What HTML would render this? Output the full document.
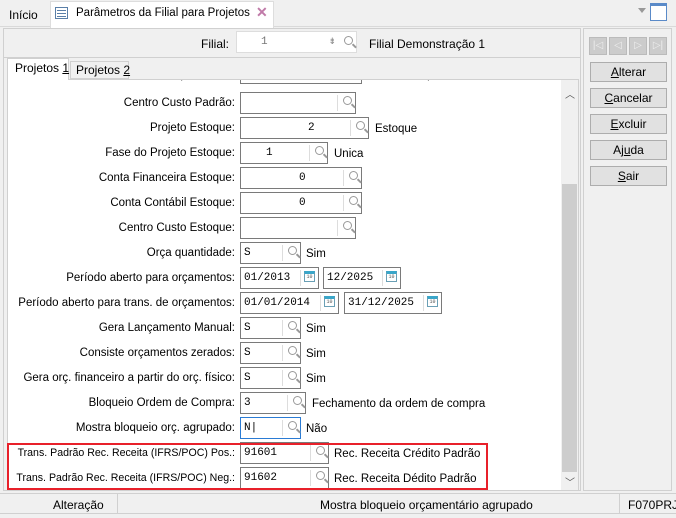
<!DOCTYPE html><html><head><meta charset="utf-8"><style>
*{box-sizing:border-box;margin:0;padding:0}
body{width:676px;height:518px;background:#f0f0f0;font-family:"Liberation Sans",sans-serif;font-size:12px;color:#000;position:relative;overflow:hidden}
.a{position:absolute}
.lbl{position:absolute;right:441px;white-space:nowrap;font-size:11.5px;line-height:14px}
.in{position:absolute;height:22px;border:1px solid #7a7a7a;background:#fff;font-family:"Liberation Mono",monospace;font-size:11px;line-height:20px;padding-left:3px}
.in .s{position:absolute;right:0;top:2px;bottom:2px;width:18px;border-left:1px solid #ddd}
.mg{position:absolute;right:3px;top:3px;width:9px;height:9px;border:1.5px solid #999;border-radius:50%}
.mg:after{content:"";position:absolute;left:7px;top:8px;width:5px;height:1.5px;background:#999;transform:rotate(45deg)}
.cal{position:absolute;right:3px;top:3px;width:11px;height:11px;border:1px solid #6a9fb5;border-top:3px solid #3aa6c9;font-size:5px;line-height:6px;text-align:center;color:#555}
.suf{position:absolute;white-space:nowrap;font-size:11.5px;line-height:14px}
.btn{position:absolute;left:590px;width:77px;height:20px;border:1px solid #adadad;background:#e1e1e1;text-align:center;line-height:18px;font-size:12px}
</style></head><body>
<!-- top tabs -->
<div class="a" style="left:0;top:0;width:676px;height:27px;background:#f0f0f0;border-bottom:1px solid #d9d9d9"></div>
<div class="a" style="left:9px;top:8px;font-size:12px">Início</div>
<div class="a" style="left:50px;top:1px;width:224px;height:27px;background:#fff;border:1px solid #ddd;border-bottom:none"></div>
<div class="a" style="left:55px;top:7px;width:13px;height:12px;border:1px solid #5a7fa8;background:#fff"><div style="margin:2px 1px;height:1px;background:#5a7fa8;box-shadow:0 3px #5a7fa8,0 6px #5a7fa8"></div></div>
<div class="a" style="left:76px;top:7px;font-size:11.5px">Parâmetros da Filial para Projetos</div>
<div class="a" style="left:256px;top:4px;font-size:14px;color:#c07aa8;font-weight:bold">✕</div>
<div class="a" style="left:638px;top:8px;width:0;height:0;border:4px solid transparent;border-top:5px solid #999"></div>
<div class="a" style="left:650px;top:3px;width:17px;height:18px;border:1px solid #5a8ac8;border-top:3px solid #5a8ac8;background:#fff"></div>
<!-- left panel -->
<div class="a" style="left:3px;top:28px;width:578px;height:463px;border:1px solid #d0d0d0;background:#f0f0f0"></div>
<div class="a" style="left:201px;top:37px">Filial:</div>
<div class="in" style="left:236px;top:31px;width:121px;border-color:#ddd;color:#777;padding-left:24px">1<span class="a" style="right:20px;top:0;font-size:9px;color:#888">⇟</span><span class="mg" style="top:4px"></span></div>
<div class="a" style="left:369px;top:37px">Filial Demonstração 1</div>
<!-- sub tabs -->
<div class="a" style="left:3px;top:57px;width:577px;border-top:1px solid #d0d0d0"></div>
<div class="a" style="left:7px;top:58px;width:62px;height:22px;background:#fff;border:1px solid #d0d0d0;border-bottom:none;z-index:2"></div>
<div class="a" style="left:15px;top:61px;z-index:3">Projetos <u>1</u></div>
<div class="a" style="left:70px;top:61px;width:59px;height:18px;border:1px solid #d0d0d0;background:#f0f0f0"></div>
<div class="a" style="left:76px;top:63px">Projetos <u>2</u></div>
<div class="a" style="left:7px;top:79px;width:572px;height:412px;background:#fff;border:1px solid #d0d0d0;overflow:hidden">
<div class="a" style="left:553px;top:0;width:17px;height:411px;background:#f0f0f0"></div>
<div class="a" style="left:554px;top:104px;width:15px;height:288px;background:#cdcdcd"></div>
<div class="a" style="left:557px;top:6px;font-size:10px;color:#555">︿</div>
<div class="a" style="left:557px;top:394px;font-size:10px;color:#555">﹀</div>
</div>
<div class="a" style="left:8px;top:80px;width:550px;height:5px;overflow:hidden"><div class="a" style="left:118px;top:-11px;font-size:11.5px;color:#333">Conta Despesa Padrão:</div><div class="a" style="left:232px;top:-14px;width:122px;height:18px;border:1px solid #7a7a7a"></div><div class="a" style="left:361px;top:-11px;font-size:11.5px;color:#333">Outras Despesas Financeiras</div></div>

<div class="lbl" style="top:96px">Centro Custo Padrão:</div><div class="in" style="left:240px;top:92px;width:116px"><span class="s"></span><span class="mg"></span></div>
<div class="lbl" style="top:121px">Projeto Estoque:</div><div class="in" style="left:240px;top:117px;width:129px;padding-left:67px">2<span class="s"></span><span class="mg"></span></div><div class="suf" style="left:375px;top:122px">Estoque</div>
<div class="lbl" style="top:146px">Fase do Projeto Estoque:</div><div class="in" style="left:240px;top:142px;width:88px;padding-left:25px">1<span class="s"></span><span class="mg"></span></div><div class="suf" style="left:334px;top:147px">Unica</div>
<div class="lbl" style="top:171px">Conta Financeira Estoque:</div><div class="in" style="left:240px;top:167px;width:122px;padding-left:58px">0<span class="s"></span><span class="mg"></span></div>
<div class="lbl" style="top:196px">Conta Contábil Estoque:</div><div class="in" style="left:240px;top:192px;width:122px;padding-left:58px">0<span class="s"></span><span class="mg"></span></div>
<div class="lbl" style="top:221px">Centro Custo Estoque:</div><div class="in" style="left:240px;top:217px;width:116px"><span class="s"></span><span class="mg"></span></div>
<div class="lbl" style="top:246px">Orça quantidade:</div><div class="in" style="left:240px;top:242px;width:61px">S<span class="s"></span><span class="mg"></span></div><div class="suf" style="left:306px;top:247px">Sim</div>
<div class="lbl" style="top:271px">Período aberto para orçamentos:</div><div class="in" style="left:240px;top:267px;width:79px">01/2013<span class="s"></span><span class="cal">10</span></div><div class="in" style="left:323px;top:267px;width:78px">12/2025<span class="s"></span><span class="cal">10</span></div>
<div class="lbl" style="top:296px">Período aberto para trans. de orçamentos:</div><div class="in" style="left:240px;top:292px;width:99px">01/01/2014<span class="s"></span><span class="cal">10</span></div><div class="in" style="left:344px;top:292px;width:98px">31/12/2025<span class="s"></span><span class="cal">10</span></div>
<div class="lbl" style="top:321px">Gera Lançamento Manual:</div><div class="in" style="left:240px;top:317px;width:61px">S<span class="s"></span><span class="mg"></span></div><div class="suf" style="left:306px;top:322px">Sim</div>
<div class="lbl" style="top:346px">Consiste orçamentos zerados:</div><div class="in" style="left:240px;top:342px;width:61px">S<span class="s"></span><span class="mg"></span></div><div class="suf" style="left:306px;top:347px">Sim</div>
<div class="lbl" style="top:371px">Gera orç. financeiro a partir do orç. físico:</div><div class="in" style="left:240px;top:367px;width:61px">S<span class="s"></span><span class="mg"></span></div><div class="suf" style="left:306px;top:372px">Sim</div>
<div class="lbl" style="top:396px">Bloqueio Ordem de Compra:</div><div class="in" style="left:240px;top:392px;width:66px">3<span class="s"></span><span class="mg"></span></div><div class="suf" style="left:312px;top:397px">Fechamento da ordem de compra</div>
<div class="lbl" style="top:421px">Mostra bloqueio orç. agrupado:</div><div class="in" style="left:240px;top:417px;width:61px;border-color:#2a7bd4">N|<span class="s"></span><span class="mg"></span></div><div class="suf" style="left:306px;top:422px">Não</div>
<div class="lbl" style="top:446px;font-size:10.6px">Trans. Padrão Rec. Receita (IFRS/POC) Pos.:</div><div class="in" style="left:240px;top:442px;width:89px">91601<span class="s"></span><span class="mg"></span></div><div class="suf" style="left:334px;top:447px">Rec. Receita Crédito Padrão</div>
<div class="lbl" style="top:471px;font-size:10.6px">Trans. Padrão Rec. Receita (IFRS/POC) Neg.:</div><div class="in" style="left:240px;top:467px;width:89px">91602<span class="s"></span><span class="mg"></span></div><div class="suf" style="left:334px;top:472px">Rec. Receita Dédito Padrão</div>
<div class="a" style="left:7px;top:443px;width:481px;height:47px;border:2px solid #e8202a"></div>
<!-- right panel -->
<div class="a" style="left:583px;top:28px;width:89px;height:463px;border:1px solid #d0d0d0"></div>
<div class="a" style="left:589px;top:37px;width:78px;height:18px;display:flex;gap:2px">
<div style="flex:1;background:#ccc;border:1px solid #bbb;color:#eee;font-size:10px;text-align:center;line-height:16px">|◁</div><div style="flex:1;background:#ccc;border:1px solid #bbb;color:#eee;font-size:10px;text-align:center;line-height:16px">◁</div><div style="flex:1;background:#ccc;border:1px solid #bbb;color:#eee;font-size:10px;text-align:center;line-height:16px">▷</div><div style="flex:1;background:#ccc;border:1px solid #bbb;color:#eee;font-size:10px;text-align:center;line-height:16px">▷|</div></div>
<div class="btn" style="top:62px"><u>A</u>lterar</div>
<div class="btn" style="top:88px"><u>C</u>ancelar</div>
<div class="btn" style="top:114px"><u>E</u>xcluir</div>
<div class="btn" style="top:140px">Aj<u>u</u>da</div>
<div class="btn" style="top:166px"><u>S</u>air</div>
<!-- status -->
<div class="a" style="left:0;top:493px;width:676px;height:21px;border-top:1px solid #d0d0d0;border-bottom:1px solid #d0d0d0"></div>
<div class="a" style="left:117px;top:494px;height:20px;border-left:1px solid #d0d0d0"></div>
<div class="a" style="left:619px;top:494px;height:20px;border-left:1px solid #d0d0d0"></div>
<div class="a" style="left:53px;top:498px">Alteração</div>
<div class="a" style="left:320px;top:498px">Mostra bloqueio orçamentário agrupado</div>
<div class="a" style="left:628px;top:498px">F070PRJ</div>
</body></html>
